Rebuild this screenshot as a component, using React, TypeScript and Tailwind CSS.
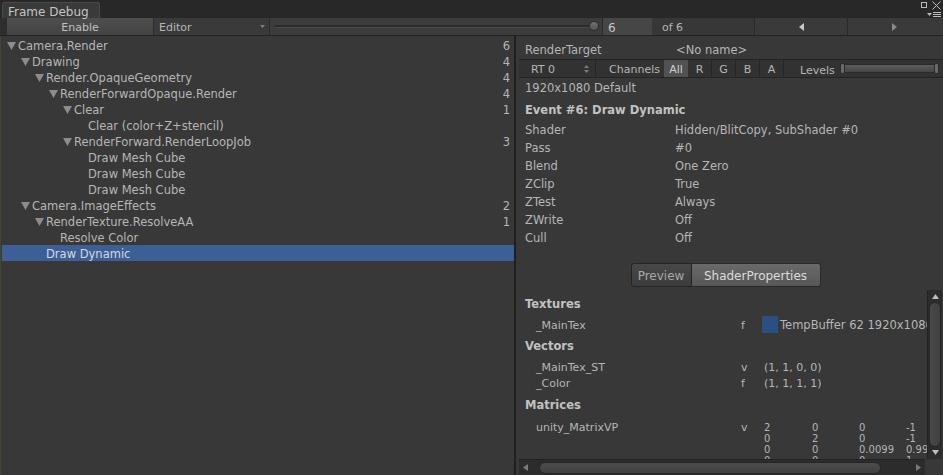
import React from "react";

type Node = { label: string; depth: number; arrow: boolean; count?: string; selected?: boolean };

const tree: Node[] = [
  { label: "Camera.Render", depth: 0, arrow: true, count: "6" },
  { label: "Drawing", depth: 1, arrow: true, count: "4" },
  { label: "Render.OpaqueGeometry", depth: 2, arrow: true, count: "4" },
  { label: "RenderForwardOpaque.Render", depth: 3, arrow: true, count: "4" },
  { label: "Clear", depth: 4, arrow: true, count: "1" },
  { label: "Clear (color+Z+stencil)", depth: 5, arrow: false },
  { label: "RenderForward.RenderLoopJob", depth: 4, arrow: true, count: "3" },
  { label: "Draw Mesh Cube", depth: 5, arrow: false },
  { label: "Draw Mesh Cube", depth: 5, arrow: false },
  { label: "Draw Mesh Cube", depth: 5, arrow: false },
  { label: "Camera.ImageEffects", depth: 1, arrow: true, count: "2" },
  { label: "RenderTexture.ResolveAA", depth: 2, arrow: true, count: "1" },
  { label: "Resolve Color", depth: 3, arrow: false },
  { label: "Draw Dynamic", depth: 2, arrow: false, selected: true },
];

const props: [string, string][] = [
  ["Shader", "Hidden/BlitCopy, SubShader #0"],
  ["Pass", "#0"],
  ["Blend", "One Zero"],
  ["ZClip", "True"],
  ["ZTest", "Always"],
  ["ZWrite", "Off"],
  ["Cull", "Off"],
];

const matrix = [
  ["2", "0", "0", "-1"],
  ["0", "2", "0", "-1"],
  ["0", "0", "0.0099", "0.99"],
  ["0", "0", "0", "1"],
];

function Down() {
  return (
    <svg width="9" height="8" viewBox="0 0 9 8">
      <polygon points="0,0 9,0 4.5,8" fill="#8c8c8c" />
    </svg>
  );
}

export default function App() {
  return (
    <div className="w-[943px] h-[475px] overflow-hidden bg-[#383838] text-[#b6b6b6] font-['DejaVu_Sans',sans-serif] text-[11px] leading-none flex flex-col select-none">
      {/* title tab bar */}
      <div className="h-[18px] bg-[#282828] flex items-end relative shrink-0">
        <div className="ml-[2px] w-[98px] h-[16px] bg-[#3a3a3a] border border-b-0 border-[#4a4a4a] rounded-t-[3px] flex items-center pl-[5px] pt-[2px] text-[12px] text-[#c4c4c4]">
          Frame Debug
        </div>
        <div className="absolute right-[16px] top-[2px] w-[6px] h-[6px] border border-[#bcbcbc]" />
        <svg className="absolute right-[2px] top-[1px]" width="9" height="9" viewBox="0 0 9 9">
          <path d="M0.5 0.5 L8.5 8.5 M8.5 0.5 L0.5 8.5" stroke="#bcbcbc" strokeWidth="1" />
        </svg>
        <div className="absolute right-[2px] top-[12px] flex items-center gap-[1px]">
          <svg width="5" height="3" viewBox="0 0 5 3"><polygon points="0,0 5,0 2.5,3" fill="#bcbcbc" /></svg>
          <div className="flex flex-col gap-[1px]">
            <div className="w-[8px] h-[1px] bg-[#bcbcbc]" />
            <div className="w-[8px] h-[1px] bg-[#bcbcbc]" />
            <div className="w-[8px] h-[1px] bg-[#bcbcbc]" />
          </div>
        </div>
      </div>

      {/* toolbar */}
      <div className="h-[18px] shrink-0 bg-[#3c3c3c] border-b border-[#232323] flex items-stretch">
        <div className="w-[7px] bg-[#2e2e2e]" />
        <div className="w-[147px] bg-gradient-to-b from-[#4e4e4e] to-[#444444] border-r border-[#2a2a2a] flex items-center justify-center pt-[2px] text-[#c0c0c0]">
          Enable
        </div>
        <div className="w-[116px] bg-[#3a3a3a] border-r border-[#2a2a2a] flex items-center justify-between pl-[5px] pr-[4px]">
          <span className="pt-[2px]">Editor</span>
          <svg width="5" height="3" viewBox="0 0 5 3"><polygon points="0,0 5,0 2.5,3" fill="#808080" /></svg>
        </div>
        <div className="w-[332px] flex items-center pl-[4px] pr-[4px] relative">
          <div className="w-full h-[3px] rounded-full bg-[#2c2c2c] border-b border-[#4a4a4a]" />
          <div className="absolute right-[3px] top-[3px] w-[10px] h-[10px] rounded-full bg-gradient-to-b from-[#707070] to-[#555555] border border-[#2e2e2e]" />
        </div>
        <div className="w-[50px] bg-[#464646] border-l border-[#2a2a2a] flex items-center pl-[5px] pt-[2px] text-[12px] text-[#c8c8c8]">
          6
        </div>
        <div className="w-[102px] bg-[#373737] flex items-center pl-[10px] pt-[2px]">of 6</div>
        <div className="w-[93px] bg-[#3a3a3a] border-l border-[#2a2a2a] flex items-center justify-center">
          <svg width="5" height="8" viewBox="0 0 5 8"><polygon points="5,0 5,8 0,4" fill="#c8c8c8" /></svg>
        </div>
        <div className="w-[93px] bg-[#3a3a3a] border-l border-[#2a2a2a] flex items-center justify-center">
          <svg width="5" height="8" viewBox="0 0 5 8"><polygon points="0,0 0,8 5,4" fill="#8a8a8a" /></svg>
        </div>
        <div className="flex-1 bg-[#3a3a3a]" />
      </div>

      {/* main */}
      <div className="flex-1 flex min-h-0">
        {/* tree */}
        <div className="w-[514px] shrink-0 border-l border-[#3d4a33] pl-[1px] pt-[1px] flex flex-col">
          {tree.map((n, i) => (
            <div
              key={i}
              className={`h-[16px] flex items-center pr-[4px] pt-[3px] ${n.selected ? "bg-[#3e5f96] text-[#d4d8e0]" : ""}`}
            >
              <div className="flex items-center" style={{ paddingLeft: 5 + 14 * n.depth }}>
                <div className="w-[11px] flex items-center -mt-[2px]">{n.arrow ? <Down /> : null}</div>
                <span className="text-[11.5px]">{n.label}</span>
              </div>
              <div className="flex-1" />
              <span className="text-[11.5px]">{n.count ?? ""}</span>
            </div>
          ))}
        </div>

        <div className="w-[2px] shrink-0 bg-[#1f1f1f]" />

        {/* right panel */}
        <div className="flex-1 flex flex-col min-w-0 min-h-0 text-[11.5px]">
          <div className="mt-[4px] h-[18px] flex items-center pl-[9px] pt-[3px]">
            <span className="w-[151px]">RenderTarget</span>
            <span>&lt;No name&gt;</span>
          </div>
          {/* channels strip */}
          <div className="mt-[1px] ml-[3px] h-[19px] bg-[#323232] border-y border-[#242424] flex items-stretch text-[11px]">
            <div className="w-[77px] border-r border-[#262626] flex items-center justify-between pl-[12px] pr-[6px]">
              <span className="pt-[1px]">RT 0</span>
              <svg width="5" height="8" viewBox="0 0 5 8">
                <polygon points="0,3 5,3 2.5,0" fill="#7c7c7c" />
                <polygon points="0,5 5,5 2.5,8" fill="#7c7c7c" />
              </svg>
            </div>
            <div className="w-[68px] flex items-end justify-end pr-[4px] pb-[2px]">Channels</div>
            <div className="w-[24px] bg-[#525252] flex items-center justify-center pt-[1px] text-[#d0d0d0]">All</div>
            {["R", "G", "B", "A"].map((c) => (
              <div key={c} className="w-[24px] border-r border-[#262626] flex items-center justify-center pt-[1px]">
                {c}
              </div>
            ))}
            <div className="flex-1 flex items-center pl-[16px] pr-[4px]">
              <span className="mt-[4px] mr-[5px]">Levels</span>
              <div className="flex-1 h-[9px] rounded-full bg-gradient-to-b from-[#5c5c5c] to-[#464646] border border-[#2a2a2a] relative">
                <div className="absolute left-[-1px] top-[-2px] w-[5px] h-[11px] rounded-[2px] bg-[#6a6a6a] border border-[#2a2a2a]" />
                <div className="absolute right-[-1px] top-[-2px] w-[5px] h-[11px] rounded-[2px] bg-[#6a6a6a] border border-[#2a2a2a]" />
              </div>
            </div>
          </div>
          <div className="h-[18px] flex items-center pl-[9px] pt-[3px]">1920x1080 Default</div>
          <div className="mt-[4px] h-[18px] flex items-center pl-[9px] pt-[3px] font-bold text-[#c2c2c2]">
            Event #6: Draw Dynamic
          </div>
          <div className="mt-[2px] flex flex-col">
            {props.map(([k, v]) => (
              <div key={k} className="h-[18px] flex items-center pl-[9px] pt-[3px]">
                <span className="w-[150px]">{k}</span>
                <span>{v}</span>
              </div>
            ))}
          </div>

          {/* tabs */}
          <div className="mt-[17px] h-[24px] flex justify-center pr-[8px] shrink-0">
            <div className="w-[61px] rounded-l-[3px] bg-gradient-to-b from-[#484848] to-[#3c3c3c] border border-[#242424] flex items-center justify-center pt-[1px] text-[12px] text-[#a8a8a8]">
              Preview
            </div>
            <div className="w-[129px] rounded-r-[3px] bg-gradient-to-b from-[#6a6a6a] to-[#575757] border border-l-0 border-[#2a2a2a] flex items-center justify-center pt-[1px] text-[12px] text-[#dcdcdc]">
              ShaderProperties
            </div>
          </div>

          {/* shader properties scroll area */}
          <div className="mt-[3px] flex-1 flex flex-col min-h-0">
            <div className="flex-1 flex min-h-0">
              <div className="flex-1 overflow-hidden min-w-0 text-[11px]">
                <div className="w-[460px]">
                  <div className="mt-[5px] h-[16px] flex items-center pl-[9px] pt-[4px] text-[11.5px] font-bold text-[#c2c2c2]">Textures</div>
                  <div className="mt-[1px] h-[24px] flex items-center pl-[20px]">
                    <span className="w-[205px] pt-[3px]">_MainTex</span>
                    <span className="w-[21px] pt-[3px]">f</span>
                    <div className="w-[16px] h-[17px] bg-[#2c4f82] mr-[2px]" />
                    <span className="text-[11.5px] whitespace-nowrap pt-[3px]">TempBuffer 62 1920x1080</span>
                  </div>
                  <div className="mt-[1px] h-[16px] flex items-center pl-[9px] pt-[4px] text-[11.5px] font-bold text-[#c2c2c2]">Vectors</div>
                  <div className="mt-[5px] h-[16px] flex items-center pl-[20px] pt-[3px]">
                    <span className="w-[205px]">_MainTex_ST</span>
                    <span className="w-[23px]">v</span>
                    <span>(1, 1, 0, 0)</span>
                  </div>
                  <div className="h-[16px] flex items-center pl-[20px] pt-[3px]">
                    <span className="w-[205px]">_Color</span>
                    <span className="w-[23px]">f</span>
                    <span>(1, 1, 1, 1)</span>
                  </div>
                  <div className="mt-[6px] h-[16px] flex items-center pl-[9px] pt-[4px] text-[11.5px] font-bold text-[#c2c2c2]">Matrices</div>
                  <div className="mt-[9px] flex pl-[20px]">
                    <span className="w-[205px] h-[11px] flex items-center pt-[2px]">unity_MatrixVP</span>
                    <span className="w-[23px] h-[11px] flex items-center pt-[2px]">v</span>
                    <div className="flex flex-col">
                      {matrix.map((r, i) => (
                        <div key={i} className="h-[11px] flex items-center pt-[2px] text-[10px]">
                          <span className="w-[48px]">{r[0]}</span>
                          <span className="w-[47px]">{r[1]}</span>
                          <span className="w-[47px]">{r[2]}</span>
                          <span>{r[3]}</span>
                        </div>
                      ))}
                    </div>
                  </div>
                </div>
              </div>
              {/* vertical scrollbar */}
              <div className="w-[15px] shrink-0 mr-[1px] bg-[#2c2c2c] border-l border-[#222] flex flex-col items-center">
                <svg className="mt-[4px]" width="7" height="5" viewBox="0 0 7 5"><polygon points="0,5 7,5 3.5,0" fill="#bdbdbd" /></svg>
                <div className="mt-[3px] flex-1 w-[12px] rounded-[6px] bg-gradient-to-r from-[#4a4a4a] to-[#3f3f3f] border border-[#262626]" />
                <svg className="mt-[3px] mb-[4px]" width="7" height="5" viewBox="0 0 7 5"><polygon points="0,0 7,0 3.5,5" fill="#bdbdbd" /></svg>
              </div>
            </div>
            {/* horizontal scrollbar */}
            <div className="h-[16px] shrink-0 flex">
              <div className="ml-[3px] w-[406px] bg-[#2c2c2c] border-t border-[#222] flex items-center px-[4px]">
                <svg width="5" height="7" viewBox="0 0 5 7"><polygon points="5,0 5,7 0,3.5" fill="#7a7a7a" /></svg>
                <div className="ml-[11px] w-[342px] h-[12px] rounded-[6px] bg-gradient-to-b from-[#4c4c4c] to-[#404040] border border-[#262626]" />
                <div className="flex-1" />
                <svg width="5" height="7" viewBox="0 0 5 7"><polygon points="0,0 0,7 5,3.5" fill="#7a7a7a" /></svg>
              </div>
              <div className="flex-1" />
            </div>
          </div>
        </div>
      </div>
    </div>
  );
}
